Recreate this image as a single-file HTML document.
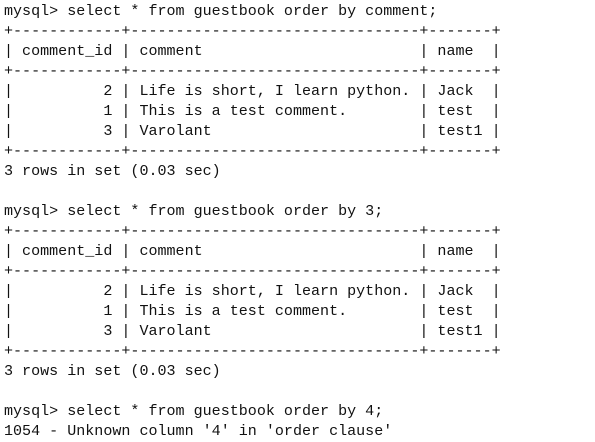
<!DOCTYPE html>
<html><head><style>
html,body{margin:0;padding:0;background:#fff;width:595px;height:442px;overflow:hidden}
pre{margin:0;position:absolute;left:4px;top:1px;font-family:"Liberation Mono",monospace;font-size:15.05px;line-height:20px;color:#111}
</style></head><body><pre>mysql&gt; select * from guestbook order by comment;
+------------+--------------------------------+-------+
| comment_id | comment                        | name  |
+------------+--------------------------------+-------+
|          2 | Life is short, I learn python. | Jack  |
|          1 | This is a test comment.        | test  |
|          3 | Varolant                       | test1 |
+------------+--------------------------------+-------+
3 rows in set (0.03 sec)

mysql&gt; select * from guestbook order by 3;
+------------+--------------------------------+-------+
| comment_id | comment                        | name  |
+------------+--------------------------------+-------+
|          2 | Life is short, I learn python. | Jack  |
|          1 | This is a test comment.        | test  |
|          3 | Varolant                       | test1 |
+------------+--------------------------------+-------+
3 rows in set (0.03 sec)

mysql&gt; select * from guestbook order by 4;
1054 - Unknown column '4' in 'order clause'</pre></body></html>
